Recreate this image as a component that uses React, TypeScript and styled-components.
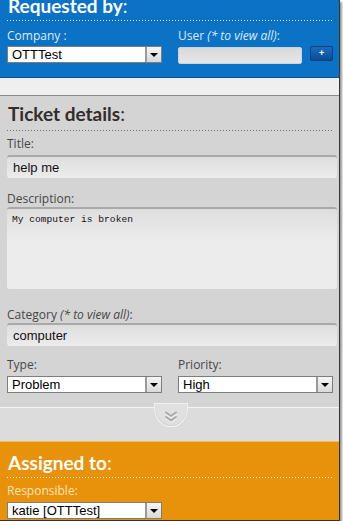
import React from "react";
import styled, { createGlobalStyle } from "styled-components";

const Global = createGlobalStyle`
  html, body { margin: 0; padding: 0; background: #ffffff; }
  body { font-family: "Open Sans", "DejaVu Sans", sans-serif; }
  * { box-sizing: border-box; }
`;

type Tone = "blue" | "grey" | "orange";

const toneBg: Record<Tone, string> = {
  blue: "#0b72c6",
  grey: "#d4d4d4",
  orange: "#e8910b",
};
const toneHead: Record<Tone, string> = {
  blue: "#ffffff",
  grey: "#332d2d",
  orange: "#ffffff",
};
const toneLabel: Record<Tone, string> = {
  blue: "#dfeafa",
  grey: "#474747",
  orange: "#fde4bd",
};
const toneDots: Record<Tone, string> = {
  blue: "rgba(255,255,255,0.85)",
  grey: "#6e6e6e",
  orange: "rgba(255,255,255,0.85)",
};

const Panel = styled.div`
  width: 340px;
  border-right: 1px solid #333;
  border-bottom: 1px solid #333;
  box-shadow: 2px 2px 2px rgba(0, 0, 0, 0.4);
  overflow: hidden;
`;

const Section = styled.section<{ $tone: Tone }>`
  background: ${(p) => toneBg[p.$tone]};
  padding: 0 0 0 7px;
  overflow: hidden;
  display: flex;
  flex-direction: column;
  ${(p) =>
    p.$tone === "blue"
      ? "height: 78px; border-bottom: 1px solid #0a5399;"
      : p.$tone === "grey"
      ? "padding-bottom: 14px;"
      : "border-top: 1px solid #f7b955; padding-bottom: 1px;"}
`;

const Heading = styled.h2<{ $tone: Tone; $top: number }>`
  margin: ${(p) => p.$top}px 0 0 1px;
  font-family: Lato, "Open Sans", sans-serif;
  font-size: 19px;
  line-height: 24px;
  font-weight: 700;
  color: ${(p) => toneHead[p.$tone]};
  letter-spacing: 0;
  span {
    font-weight: 400;
  }
`;

const Dots = styled.div<{ $tone: Tone; $top: number }>`
  margin-top: ${(p) => p.$top}px;
  width: 327px;
  height: 1px;
  background-image: linear-gradient(
    to right,
    ${(p) => toneDots[p.$tone]} 1px,
    transparent 1px
  );
  background-size: 3px 1px;
`;

const Label = styled.div<{ $tone: Tone; $top: number }>`
  margin-top: ${(p) => p.$top}px;
  font-size: 12px;
  line-height: 15px;
  color: ${(p) => toneLabel[p.$tone]};
  white-space: nowrap;
  em {
    font-style: italic;
  }
`;

const Row = styled.div<{ $top: number }>`
  display: grid;
  grid-template-columns: 155px 155px;
  column-gap: 16px;
  margin-top: ${(p) => p.$top}px;
`;

const Field = styled.div`
  display: flex;
  flex-direction: column;
`;

const SelectBox = styled.div<{ $top: number }>`
  margin-top: ${(p) => p.$top}px;
  width: 155px;
  height: 17px;
  background: #fff;
  border: 1px solid #7d7d7d;
  display: flex;
  align-items: stretch;
`;

const SelectValue = styled.div`
  flex: 1;
  font-family: "Liberation Sans", Arial, sans-serif;
  font-size: 13px;
  line-height: 15px;
  color: #000;
  padding-left: 4px;
  white-space: nowrap;
  overflow: hidden;
`;

const Arrow = styled.div`
  width: 16px;
  border-left: 2px solid #9a9a9a;
  background: linear-gradient(#f5f5f5, #d9d9d9);
  display: flex;
  align-items: center;
  justify-content: center;
  &::after {
    content: "";
    border-left: 4px solid transparent;
    border-right: 4px solid transparent;
    border-top: 4px solid #000;
    margin-top: 1px;
  }
`;

const UserRow = styled.div`
  display: flex;
  align-items: flex-start;
  gap: 8px;
  margin-top: 3px;
`;

const UserInput = styled.div`
  width: 125px;
  height: 17px;
  margin-top: 1px;
  border-radius: 2px;
  background: linear-gradient(#d9d9d9, #e6e6e6);
  border: 1px solid #c9d3dc;
`;

const PlusButton = styled.button`
  width: 23px;
  height: 15px;
  padding: 0;
  border: 1px solid #073f7a;
  border-radius: 2px;
  background: linear-gradient(#1d6cc0, #0a4d93);
  color: #fff;
  font-family: "Liberation Sans", Arial, sans-serif;
  font-size: 9px;
  line-height: 11px;
  font-weight: 700;
`;

const Strip = styled.div`
  height: 18px;
  background: #efefef;
  border-bottom: 1px solid #8a8a8a;
`;

const TextField = styled.div<{ $top: number; $tall?: boolean }>`
  margin-top: ${(p) => p.$top}px;
  width: 330px;
  height: ${(p) => (p.$tall ? 82 : 23)}px;
  border-top: 2px solid #a9a9a9;
  border-radius: 3px;
  background: linear-gradient(#dedede, #ececec ${(p) => (p.$tall ? "40%" : "100%")});
  padding: ${(p) => (p.$tall ? "5px 0 0 5px" : "2px 0 0 6px")};
  font-family: ${(p) =>
    p.$tall
      ? '"Liberation Mono", "Courier New", monospace'
      : '"Liberation Sans", Arial, sans-serif'};
  font-size: ${(p) => (p.$tall ? "9.6px" : "13px")};
  line-height: ${(p) => (p.$tall ? "12px" : "17px")};
  color: #111;
`;

const Footer = styled.div`
  position: relative;
  height: 34px;
  background: #dcdcdc;
  border-top: 1px solid #f2f2f2;
`;

const Knob = styled.div`
  position: absolute;
  left: 155px;
  top: -4px;
  width: 32px;
  height: 22px;
  border-radius: 0 0 16px 16px / 0 0 18px 18px;
  background: #e0e0e0;
  box-shadow: 0 1px 0 #f6f6f6, 0 0 0 1px #f0f0f0, inset 0 -1px 1px #cfcfcf;
  display: flex;
  align-items: flex-end;
  justify-content: center;
  padding-bottom: 3px;
`;

const Chevrons = () => (
  <svg width="14" height="13" viewBox="0 0 14 13">
    <g fill="none" strokeWidth="2" strokeLinecap="round" strokeLinejoin="round">
      <path d="M2 2.5 L7 6 L12 2.5" stroke="#f8f8f8" transform="translate(0 1)" />
      <path d="M2 7 L7 10.5 L12 7" stroke="#f8f8f8" transform="translate(0 1)" />
      <path d="M2 2.5 L7 6 L12 2.5" stroke="#a9a9a9" />
      <path d="M2 7 L7 10.5 L12 7" stroke="#a9a9a9" />
    </g>
  </svg>
);

const Select = ({ value, top }: { value: string; top: number }) => (
  <SelectBox $top={top}>
    <SelectValue>{value}</SelectValue>
    <Arrow />
  </SelectBox>
);

export default function App() {
  return (
    <>
      <Global />
      <Panel>
        <Section $tone="blue">
          <Heading $tone="blue" $top={-6}>
            Requested by<span>:</span>
          </Heading>
          <Dots $tone="blue" $top={2} />
          <Row $top={7}>
            <Field>
              <Label $tone="blue" $top={0}>Company :</Label>
              <Select value="OTTTest" top={3} />
            </Field>
            <Field>
              <Label $tone="blue" $top={0}>
                User <em>(* to view all)</em>:
              </Label>
              <UserRow>
                <UserInput />
                <PlusButton>+</PlusButton>
              </UserRow>
            </Field>
          </Row>
        </Section>
        <Strip />
        <Section $tone="grey">
          <Heading $tone="grey" $top={6}>
            Ticket details<span>:</span>
          </Heading>
          <Dots $tone="grey" $top={4} />
          <Label $tone="grey" $top={5}>Title:</Label>
          <TextField $top={4}>help me</TextField>
          <Label $tone="grey" $top={13}>Description:</Label>
          <TextField $top={1} $tall>
            My computer is broken
          </TextField>
          <Label $tone="grey" $top={18}>
            Category <em>(* to view all)</em>:
          </Label>
          <TextField $top={1}>computer</TextField>
          <Row $top={11}>
            <Field>
              <Label $tone="grey" $top={0}>Type:</Label>
              <Select value="Problem" top={4} />
            </Field>
            <Field>
              <Label $tone="grey" $top={0}>Priority:</Label>
              <Select value="High" top={4} />
            </Field>
          </Row>
        </Section>
        <Footer>
          <Knob>
            <Chevrons />
          </Knob>
        </Footer>
        <Section $tone="orange">
          <Heading $tone="orange" $top={9}>
            Assigned to<span>:</span>
          </Heading>
          <Dots $tone="orange" $top={2} />
          <Label $tone="orange" $top={5}>Responsible:</Label>
          <Select value="katie [OTTTest]" top={4} />
        </Section>
      </Panel>
    </>
  );
}
